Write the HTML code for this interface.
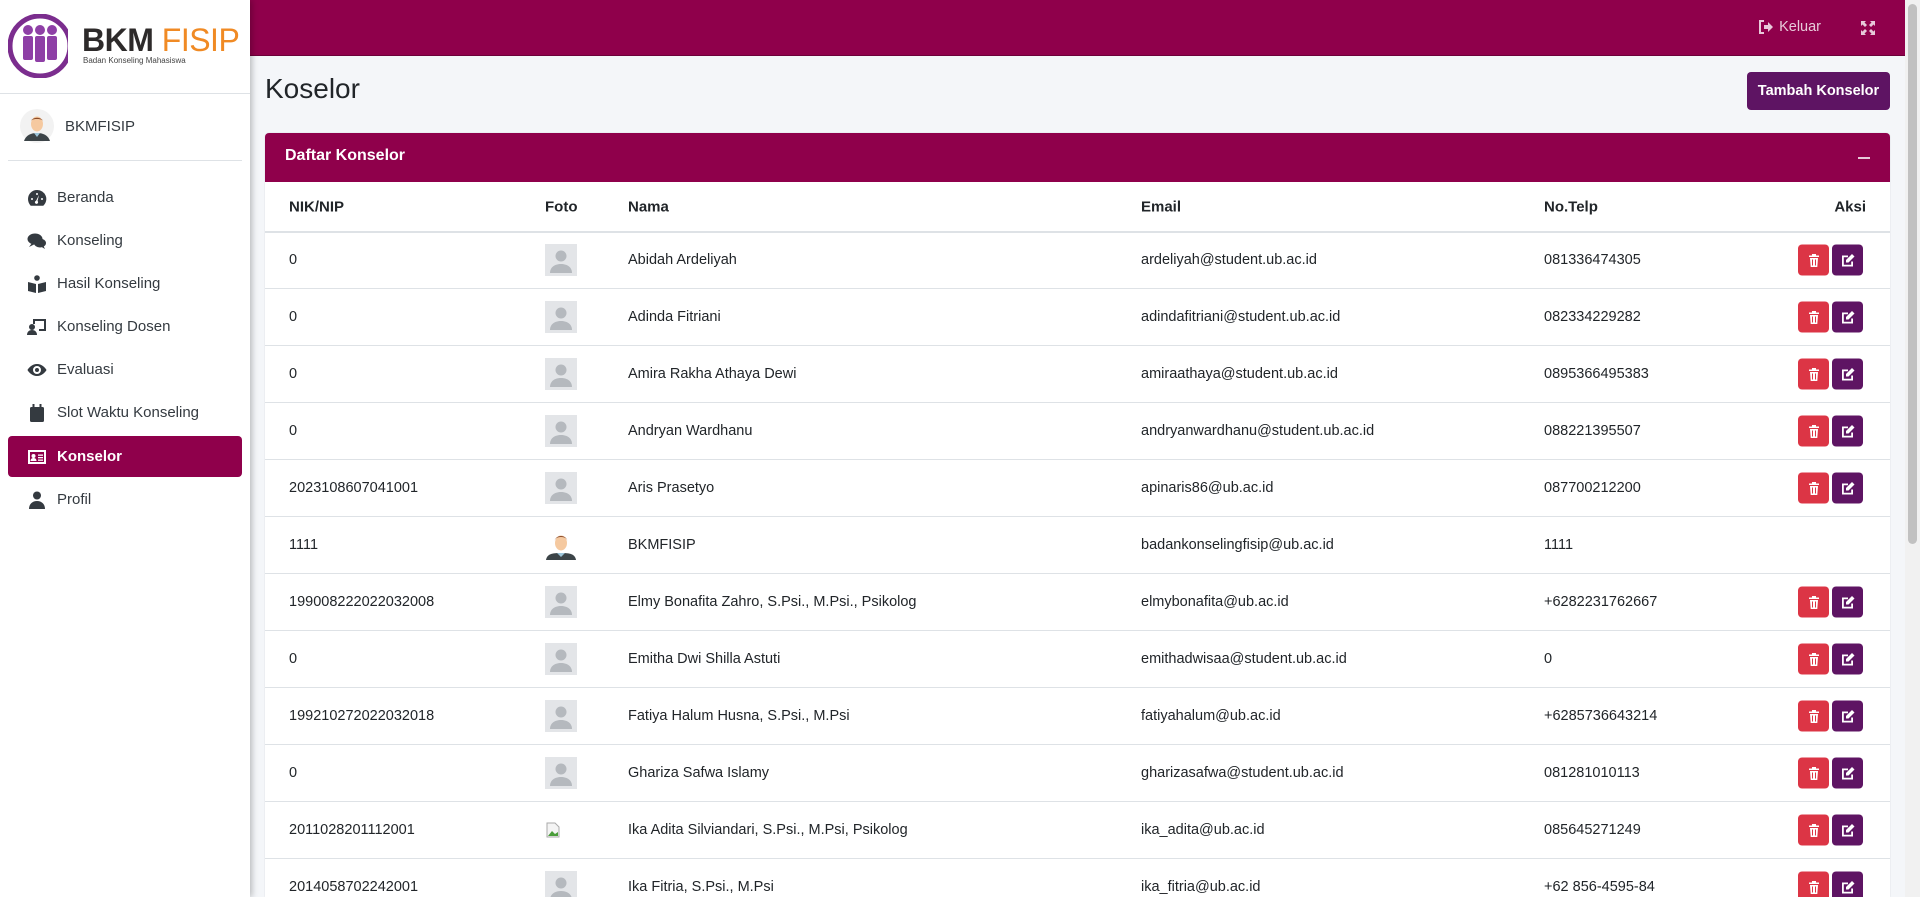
<!DOCTYPE html>
<html style="width:1920px;height:897px;overflow:hidden"><head><meta charset="utf-8"><style>
*{box-sizing:border-box;margin:0;padding:0}
body{width:1920px;height:897px;overflow:hidden;background:#f4f6f9;font-family:"Liberation Sans",sans-serif;color:#212529;position:relative}
.side{position:absolute;left:0;top:0;width:250px;height:897px;background:#fff;box-shadow:2px 0 6px rgba(0,0,0,.25);z-index:2}
.top{position:absolute;left:250px;top:0;right:15px;height:56px;background:#8f004b;border-bottom:1px solid #6c0039}
.scroll{position:absolute;right:0;top:0;width:15px;height:897px;background:#f1f1f1}
.scroll div{position:absolute;left:3px;top:4px;width:9px;height:540px;background:#c1c1c1;border-radius:5px}
.nav{position:absolute;left:8px;width:234px;height:41px;display:flex;align-items:center;padding-left:19px;font-size:15px;color:#343a40}
.nav svg{width:20px;height:18px;margin-right:10px;fill:#343a40}
.nav.act{background:#8f004b;color:#fff;border-radius:4px;font-weight:bold}
.nav.act svg{fill:#fff}
.card{position:absolute;left:265px;top:133px;width:1625px;height:764px;background:#fff;border-radius:4px 4px 0 0;box-shadow:0 0 1px rgba(0,0,0,.2)}
.ch{height:49px;background:#8f004b;border-radius:4px 4px 0 0;color:#fff;font-weight:bold;font-size:16px;padding:14px 20px}
.th{position:absolute;top:49px;left:0;right:0;height:51px;border-bottom:2px solid #dee2e6;font-weight:bold;font-size:15px}
.r{position:absolute;left:0;right:0;height:57px;border-bottom:1px solid #dee2e6;font-size:14.5px}
.c{position:absolute;top:50%;transform:translateY(-50%);white-space:nowrap}
.a{left:24px}.f{left:280px}.n{left:363px}.e{left:876px}.t{left:1279px}
.btn{position:absolute;top:50%;transform:translateY(-50%);width:31px;height:31px;border-radius:4px;display:flex;align-items:center;justify-content:center}
.del{left:1533px;background:#dc3545}.ed{left:1567px;background:#5e1463}
.btn svg{width:14px;height:14px;fill:#fff}
</style></head><body>
<div class="side">
 <svg style="position:absolute;left:8px;top:14px" width="60" height="64" viewBox="0 0 60 64"><circle cx="32" cy="32" r="30" fill="none" stroke="#7b2d8e" stroke-width="5"/><circle cx="32" cy="32" r="27" fill="#fff"/><g fill="#8e3fa6"><circle cx="20" cy="16" r="5"/><circle cx="32" cy="16" r="5"/><circle cx="44" cy="16" r="5"/><rect x="15" y="22" width="10" height="24" rx="2"/><rect x="27" y="22" width="10" height="26" rx="2"/><rect x="39" y="22" width="10" height="24" rx="2"/></g></svg>
 <div style="position:absolute;left:82px;top:22px;font-size:32px;font-weight:bold;color:#2d2a2a;letter-spacing:-0.5px;white-space:nowrap">BKM <span style="color:#f08a24;font-weight:normal">FISIP</span></div>
 <div style="position:absolute;left:83px;top:56px;font-size:8px;color:#444;white-space:nowrap">Badan Konseling Mahasiswa</div>
 <div style="position:absolute;left:0;top:93px;width:250px;border-top:1px solid #dee2e6"></div>
 <svg style="position:absolute;left:20px;top:109px" width="34" height="34" viewBox="0 0 34 34"><circle cx="17" cy="17" r="17" fill="#f2f2f2"/><path d="M4 32c2-6 7-8 13-8s11 2 13 8z" fill="#3c4448"/><path d="M14 24l3 4 3-4z" fill="#9cc4d8"/><ellipse cx="17" cy="15" rx="6" ry="7.5" fill="#f5c9a0"/><path d="M10.5 14c0-7 13-7 13 0 0-3-2-4-6.5-4s-6.5 1-6.5 4z" fill="#8b4c2a"/></svg>
 <div style="position:absolute;left:65px;top:118px;font-size:15px;color:#343a40">BKMFISIP</div>
 <div style="position:absolute;left:8px;top:160px;width:234px;border-top:1px solid #dee2e6"></div>
 <div class="nav" style="top:177px"><svg viewBox="0 0 20 18"><path d="M10 1a9 9 0 0 0-9 9c0 2.6 1 5 2.7 6.7h12.6A9 9 0 0 0 10 1zm0 3a1 1 0 1 1 0 2 1 1 0 0 1 0-2zM5 9a1 1 0 1 1 0 2 1 1 0 0 1 0-2zm10 0a1 1 0 1 1 0 2 1 1 0 0 1 0-2zm-3-3l-1.5 6a1.6 1.6 0 1 1-1.4-.3L12 6z"/></svg>Beranda</div>
 <div class="nav" style="top:220px"><svg viewBox="0 0 20 18"><ellipse cx="8" cy="7" rx="7.5" ry="5.5"/><path d="M2 15l3-4 3 1z"/><ellipse cx="13" cy="11" rx="6" ry="4.5"/><path d="M18 17l-2-4-3 1z"/></svg>Konseling</div>
 <div class="nav" style="top:263px"><svg viewBox="0 0 20 18"><circle cx="10" cy="3" r="2.8"/><path d="M1 7l8 2v9l-8-2zM19 7l-8 2v9l8-2z"/></svg>Hasil Konseling</div>
 <div class="nav" style="top:306px"><svg viewBox="0 0 20 18"><circle cx="5" cy="9" r="3"/><path d="M0 17c0-3 2-5 5-5s5 2 5 5z"/><path d="M6 1h13v12h-7v-2h5V3H8v3H6z"/></svg>Konseling Dosen</div>
 <div class="nav" style="top:349px"><svg viewBox="0 0 20 18"><path d="M10 3C5 3 1.5 7 0.5 9c1 2 4.5 6 9.5 6s8.5-4 9.5-6c-1-2-4.5-6-9.5-6zm0 10a4 4 0 1 1 0-8 4 4 0 0 1 0 8zm0-6a2 2 0 1 0 0 4 2 2 0 0 0 0-4z"/></svg>Evaluasi</div>
 <div class="nav" style="top:392px"><svg viewBox="0 0 20 18"><rect x="3" y="3" width="14" height="15" rx="1.5"/><rect x="5.5" y="0" width="2" height="4"/><rect x="12.5" y="0" width="2" height="4"/></svg>Slot Waktu Konseling</div>
 <div class="nav act" style="top:436px"><svg viewBox="0 0 20 18"><path d="M1 2h18v14H1zm2 2v10h14V4z"/><circle cx="6.5" cy="8" r="2"/><path d="M3.5 13c0-2 1.3-3 3-3s3 1 3 3z"/><rect x="11" y="6.5" width="5" height="1.3"/><rect x="11" y="9" width="5" height="1.3"/><rect x="11" y="11.5" width="5" height="1.3"/></svg>Konselor</div>
 <div class="nav" style="top:479px"><svg viewBox="0 0 20 18"><circle cx="10" cy="4.5" r="4"/><path d="M2 18c0-5 3.5-8 8-8s8 3 8 8z"/></svg>Profil</div>
</div>
<div class="top">
 <div style="position:absolute;right:84px;top:19px;color:#e7c9d9;font-size:14.5px;display:flex;align-items:center"><svg width="16" height="14" viewBox="0 0 16 14" style="margin-right:5px"><path d="M6 1H2v12h4" stroke="#e7c9d9" stroke-width="2" fill="none"/><path d="M6 5h4V2l5 5-5 5V9H6z" fill="#e7c9d9"/></svg>Keluar</div>
 <svg style="position:absolute;right:30px;top:21px" width="14" height="14" viewBox="0 0 14 14" fill="#e7c9d9"><path d="M0 0h5L3.5 1.5 6 4 4 6 1.5 3.5 0 5zM14 0v5l-1.5-1.5L10 6 8 4l2.5-2.5L9 0zM0 14V9l1.5 1.5L4 8l2 2-2.5 2.5L5 14zM14 14H9l1.5-1.5L8 10l2-2 2.5 2.5L14 9z"/></svg>
</div>
<div class="scroll"><div></div></div>
<div style="position:absolute;left:265px;top:73px;font-size:28px;color:#212529">Koselor</div>
<div style="position:absolute;left:1747px;top:72px;width:143px;height:38px;background:#5e1463;border-radius:4px;color:#fff;font-weight:bold;font-size:14.5px;text-align:center;line-height:38px">Tambah Konselor</div>
<div class="card">
 <div class="ch">Daftar Konselor<div style="position:absolute;right:20px;top:24px;width:12px;height:2px;background:#e7c9d9"></div></div>
 <div class="th"><span class="c a">NIK/NIP</span><span class="c f">Foto</span><span class="c n">Nama</span><span class="c e">Email</span><span class="c t">No.Telp</span><span class="c" style="right:24px">Aksi</span></div>
</div>
<svg width="0" height="0" style="position:absolute"><defs>
<symbol id="av" viewBox="0 0 32 32"><rect width="32" height="32" fill="#e3e5e8"/><circle cx="16" cy="12" r="5.5" fill="#b5b9be"/><path d="M5 29c0-6 5-9 11-9s11 3 11 9z" fill="#b5b9be"/></symbol>
<symbol id="tr" viewBox="0 0 14 14"><path d="M2 2h10v1.5H2zM5 .5h4V2H5zM3 4.5h8l-.7 9H3.7zm2 1.5v6h1V6zm3 0v6h1V6z"/></symbol>
<symbol id="pe" viewBox="0 0 14 14"><path d="M1 2h6v1.8H2.8v7.4h7.4V8H12v5H1z"/><path d="M11 .5l2.5 2.5-6 6H5V6.5z"/></symbol>
</defs></svg>
<div style="position:absolute;left:265px;top:232px;width:1625px;height:665px;overflow:hidden">
<div class="r" style="top:0"><span class="c a">0</span><svg class="c f" width="32" height="32"><use href="#av"/></svg><span class="c n">Abidah Ardeliyah</span><span class="c e">ardeliyah@student.ub.ac.id</span><span class="c t">081336474305</span><span class="btn del"><svg><use href="#tr"/></svg></span><span class="btn ed"><svg><use href="#pe"/></svg></span></div>
<div class="r" style="top:57px"><span class="c a">0</span><svg class="c f" width="32" height="32"><use href="#av"/></svg><span class="c n">Adinda Fitriani</span><span class="c e">adindafitriani@student.ub.ac.id</span><span class="c t">082334229282</span><span class="btn del"><svg><use href="#tr"/></svg></span><span class="btn ed"><svg><use href="#pe"/></svg></span></div>
<div class="r" style="top:114px"><span class="c a">0</span><svg class="c f" width="32" height="32"><use href="#av"/></svg><span class="c n">Amira Rakha Athaya Dewi</span><span class="c e">amiraathaya@student.ub.ac.id</span><span class="c t">0895366495383</span><span class="btn del"><svg><use href="#tr"/></svg></span><span class="btn ed"><svg><use href="#pe"/></svg></span></div>
<div class="r" style="top:171px"><span class="c a">0</span><svg class="c f" width="32" height="32"><use href="#av"/></svg><span class="c n">Andryan Wardhanu</span><span class="c e">andryanwardhanu@student.ub.ac.id</span><span class="c t">088221395507</span><span class="btn del"><svg><use href="#tr"/></svg></span><span class="btn ed"><svg><use href="#pe"/></svg></span></div>
<div class="r" style="top:228px"><span class="c a">2023108607041001</span><svg class="c f" width="32" height="32"><use href="#av"/></svg><span class="c n">Aris Prasetyo</span><span class="c e">apinaris86@ub.ac.id</span><span class="c t">087700212200</span><span class="btn del"><svg><use href="#tr"/></svg></span><span class="btn ed"><svg><use href="#pe"/></svg></span></div>
<div class="r" style="top:285px"><span class="c a">1111</span><svg class="c f" width="32" height="32" viewBox="0 0 32 32"><path d="M1 31c1-6 6-7 15-7s14 1 15 7z" fill="#3c4448"/><path d="M12 24l4 4 4-4z" fill="#9cc4d8"/><ellipse cx="16" cy="14" rx="6" ry="7.5" fill="#f5c9a0"/><path d="M9.5 13c0-8 13-8 13 0 0-3-2-5-6.5-5s-6.5 2-6.5 5z" fill="#8b4c2a"/></svg><span class="c n">BKMFISIP</span><span class="c e">badankonselingfisip@ub.ac.id</span><span class="c t">1111</span></div>
<div class="r" style="top:342px"><span class="c a">199008222022032008</span><svg class="c f" width="32" height="32"><use href="#av"/></svg><span class="c n">Elmy Bonafita Zahro, S.Psi., M.Psi., Psikolog</span><span class="c e">elmybonafita@ub.ac.id</span><span class="c t">+6282231762667</span><span class="btn del"><svg><use href="#tr"/></svg></span><span class="btn ed"><svg><use href="#pe"/></svg></span></div>
<div class="r" style="top:399px"><span class="c a">0</span><svg class="c f" width="32" height="32"><use href="#av"/></svg><span class="c n">Emitha Dwi Shilla Astuti</span><span class="c e">emithadwisaa@student.ub.ac.id</span><span class="c t">0</span><span class="btn del"><svg><use href="#tr"/></svg></span><span class="btn ed"><svg><use href="#pe"/></svg></span></div>
<div class="r" style="top:456px"><span class="c a">199210272022032018</span><svg class="c f" width="32" height="32"><use href="#av"/></svg><span class="c n">Fatiya Halum Husna, S.Psi., M.Psi</span><span class="c e">fatiyahalum@ub.ac.id</span><span class="c t">+6285736643214</span><span class="btn del"><svg><use href="#tr"/></svg></span><span class="btn ed"><svg><use href="#pe"/></svg></span></div>
<div class="r" style="top:513px"><span class="c a">0</span><svg class="c f" width="32" height="32"><use href="#av"/></svg><span class="c n">Ghariza Safwa Islamy</span><span class="c e">gharizasafwa@student.ub.ac.id</span><span class="c t">081281010113</span><span class="btn del"><svg><use href="#tr"/></svg></span><span class="btn ed"><svg><use href="#pe"/></svg></span></div>
<div class="r" style="top:570px"><span class="c a">2011028201112001</span><svg class="c f" width="16" height="16" viewBox="0 0 16 16"><path d="M2 1h8l4 4v10H2z" fill="#f4f4f4" stroke="#aaa"/><path d="M3 14l4-5 3 3 3-2v4z" fill="#4a9d3a"/></svg><span class="c n">Ika Adita Silviandari, S.Psi., M.Psi, Psikolog</span><span class="c e">ika_adita@ub.ac.id</span><span class="c t">085645271249</span><span class="btn del"><svg><use href="#tr"/></svg></span><span class="btn ed"><svg><use href="#pe"/></svg></span></div>
<div class="r" style="top:627px"><span class="c a">2014058702242001</span><svg class="c f" width="32" height="32"><use href="#av"/></svg><span class="c n">Ika Fitria, S.Psi., M.Psi</span><span class="c e">ika_fitria@ub.ac.id</span><span class="c t">+62 856-4595-84</span><span class="btn del"><svg><use href="#tr"/></svg></span><span class="btn ed"><svg><use href="#pe"/></svg></span></div>
</div>
</body></html>
